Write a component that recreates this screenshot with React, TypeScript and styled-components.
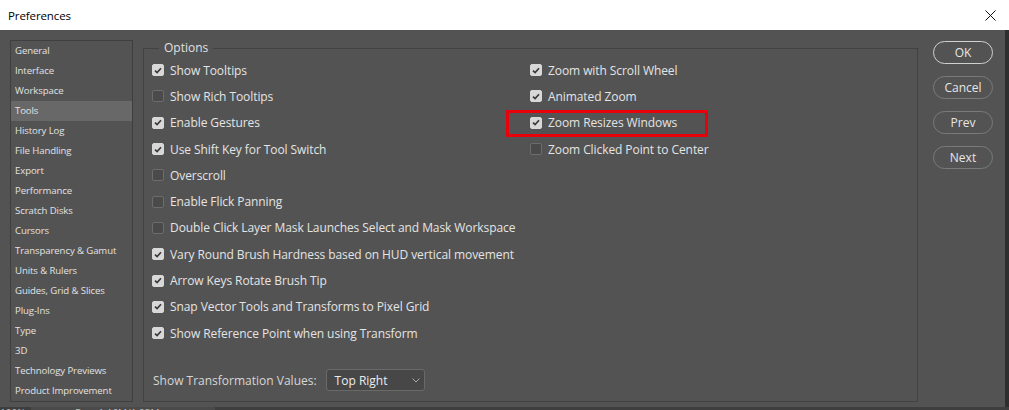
import * as React from 'react';
import styled, { createGlobalStyle } from 'styled-components';

const GlobalStyle = createGlobalStyle`
    html, body {
        margin: 0;
        padding: 0;
        background: #535353;
        overflow: hidden;
    }
    body {
        font-family: "Open Sans", "Noto Sans", Arial, sans-serif;
    }
`;

const Window = styled.div`
    width: 1009px;
    height: 410px;
    display: flex;
    flex-direction: column;
    overflow: hidden;
`;

const TitleBar = styled.div`
    height: 30px;
    flex: none;
    background: #ffffff;
    display: flex;
    align-items: center;
    justify-content: space-between;
    padding: 0 13px 0 8px;
    box-sizing: border-box;
`;

const Title = styled.span`
    font-size: 11.5px;
    color: #000;
    letter-spacing: -0.1px;
`;

const Body = styled.div`
    flex: 1;
    display: flex;
    background: #535353;
    border-right: 4px solid #2e2e2e;
    padding: 10px 0 5px 10px;
    box-sizing: border-box;
`;

const Sidebar = styled.div`
    width: 123px;
    flex: none;
    border: 1px solid #3f3f3f;
    box-sizing: border-box;
    display: flex;
    flex-direction: column;
`;

const NavItem = styled.div<{ $active?: boolean }>`
    height: 20px;
    line-height: 20px;
    padding-left: 4px;
    font-size: 9.6px;
    color: #e2e2e2;
    letter-spacing: -0.1px;
    background: ${(p) => (p.$active ? '#686868' : 'transparent')};
    white-space: nowrap;
`;

const Group = styled.fieldset`
    width: 775px;
    flex: none;
    margin: 0 0 0 10px;
    padding: 1px 0 10px 8px;
    border: 1px solid #424242;
    box-sizing: border-box;
    display: flex;
    flex-direction: column;
`;

const Legend = styled.legend`
    margin-left: 7px;
    padding: 0 5px;
    font-size: 12px;
    color: #e0e0e0;
    line-height: 16px;
`;

const Columns = styled.div`
    display: flex;
`;

const Column = styled.div<{ $width?: number }>`
    display: flex;
    flex-direction: column;
    width: ${(p) => (p.$width ? `${p.$width}px` : 'auto')};
    flex: none;
`;

const Row = styled.label`
    height: 26.3px;
    display: flex;
    align-items: center;
    gap: 6px;
    font-size: 12px;
    letter-spacing: -0.08px;
    color: #e4e4e4;
    white-space: nowrap;
    position: relative;
`;

const Highlight = styled.span`
    position: absolute;
    left: -24px;
    top: 0px;
    width: 202px;
    height: 27px;
    border: 3px solid #e8000b;
    box-sizing: border-box;
    pointer-events: none;
`;

const Box = styled.span<{ $checked?: boolean }>`
    width: 12px;
    height: 12px;
    flex: none;
    border-radius: 2px;
    box-sizing: border-box;
    display: flex;
    align-items: center;
    justify-content: center;
    background: ${(p) => (p.$checked ? '#d8d8d8' : '#4a4a4a')};
    border: 1px solid ${(p) => (p.$checked ? '#d8d8d8' : '#6c6c6c')};
`;

const Footer = styled.div`
    margin-top: auto;
    display: flex;
    align-items: center;
    gap: 9px;
    padding-left: 1px;
    font-size: 12px;
    color: #d6d6d6;
`;

const Select = styled.div`
    width: 99px;
    height: 22px;
    box-sizing: border-box;
    border: 1px solid #6a6a6a;
    border-radius: 3px;
    background: #474747;
    display: flex;
    align-items: center;
    justify-content: space-between;
    padding: 0 4px 0 8px;
    color: #ececec;
    font-size: 12px;
`;

const Buttons = styled.div`
    display: flex;
    flex-direction: column;
    gap: 12px;
    margin: 1px 0 0 15px;
`;

const Button = styled.div<{ $primary?: boolean }>`
    width: 60px;
    height: 23px;
    box-sizing: border-box;
    border-radius: 12px;
    border: ${(p) => (p.$primary ? '1.5px solid #d0d0d0' : '1px solid #7a7a7a')};
    color: #e6e6e6;
    font-size: 12px;
    display: flex;
    align-items: center;
    justify-content: center;
`;

const StatusBar = styled.div`
    height: 6px;
    flex: none;
    background: #3e3e3e;
    display: flex;
    overflow: hidden;
    font-size: 10px;
    color: #bbb;
    line-height: 10px;
`;

const StatusZoom = styled.div`
    width: 31px;
    padding-top: 1px;
    overflow: hidden;
`;

const StatusDoc = styled.div`
    width: 184px;
    background: #4a4a4a;
    padding: 1px 0 0 44px;
    box-sizing: border-box;
    white-space: nowrap;
`;

const Check = () => (
    <svg width="8" height="7" viewBox="0 0 8 7">
        <path d="M1 3.6 L3.1 5.6 L7 1.2" fill="none" stroke="#3a3a3a" strokeWidth="1.7" />
    </svg>
);

const CheckRow: React.FC<{ label: string; checked?: boolean; marked?: boolean }> = ({ label, checked, marked }) => (
    <Row>
        {marked && <Highlight />}
        <Box $checked={checked}>{checked && <Check />}</Box>
        {label}
    </Row>
);

const nav = [
    'General', 'Interface', 'Workspace', 'Tools', 'History Log', 'File Handling', 'Export',
    'Performance', 'Scratch Disks', 'Cursors', 'Transparency & Gamut', 'Units & Rulers',
    'Guides, Grid & Slices', 'Plug-Ins', 'Type', '3D', 'Technology Previews', 'Product Improvement',
];

const left: Array<[string, boolean]> = [
    ['Show Tooltips', true],
    ['Show Rich Tooltips', false],
    ['Enable Gestures', true],
    ['Use Shift Key for Tool Switch', true],
    ['Overscroll', false],
    ['Enable Flick Panning', false],
    ['Double Click Layer Mask Launches Select and Mask Workspace', false],
    ['Vary Round Brush Hardness based on HUD vertical movement', true],
    ['Arrow Keys Rotate Brush Tip', true],
    ['Snap Vector Tools and Transforms to Pixel Grid', true],
    ['Show Reference Point when using Transform', true],
];

const right: Array<[string, boolean]> = [
    ['Zoom with Scroll Wheel', true],
    ['Animated Zoom', true],
    ['Zoom Resizes Windows', true],
    ['Zoom Clicked Point to Center', false],
];

export default function App() {
    return (
        <Window>
            <GlobalStyle />
            <TitleBar>
                <Title>Preferences</Title>
                <svg width="11" height="11" viewBox="0 0 11 11">
                    <path d="M0.5 0.5 L10.5 10.5 M10.5 0.5 L0.5 10.5" stroke="#111" strokeWidth="1" />
                </svg>
            </TitleBar>
            <Body>
                <Sidebar>
                    {nav.map((n) => (
                        <NavItem key={n} $active={n === 'Tools'}>{n}</NavItem>
                    ))}
                </Sidebar>
                <Group>
                    <Legend>Options</Legend>
                    <Columns>
                        <Column $width={378}>
                            {left.map(([l, c]) => <CheckRow key={l} label={l} checked={c} />)}
                        </Column>
                        <Column>
                            {right.map(([l, c]) => (
                                <CheckRow key={l} label={l} checked={c} marked={l === 'Zoom Resizes Windows'} />
                            ))}
                        </Column>
                    </Columns>
                    <Footer>
                        Show Transformation Values:
                        <Select>
                            Top Right
                            <svg width="8" height="5" viewBox="0 0 8 5">
                                <path d="M0.5 0.5 L4 4 L7.5 0.5" fill="none" stroke="#aaa" strokeWidth="1" />
                            </svg>
                        </Select>
                    </Footer>
                </Group>
                <Buttons>
                    <Button $primary>OK</Button>
                    <Button>Cancel</Button>
                    <Button>Prev</Button>
                    <Button>Next</Button>
                </Buttons>
            </Body>
            <StatusBar>
                <StatusZoom>100%</StatusZoom>
                <StatusDoc>Doc: 1.16M/1.93M &gt;</StatusDoc>
            </StatusBar>
        </Window>
    );
}
